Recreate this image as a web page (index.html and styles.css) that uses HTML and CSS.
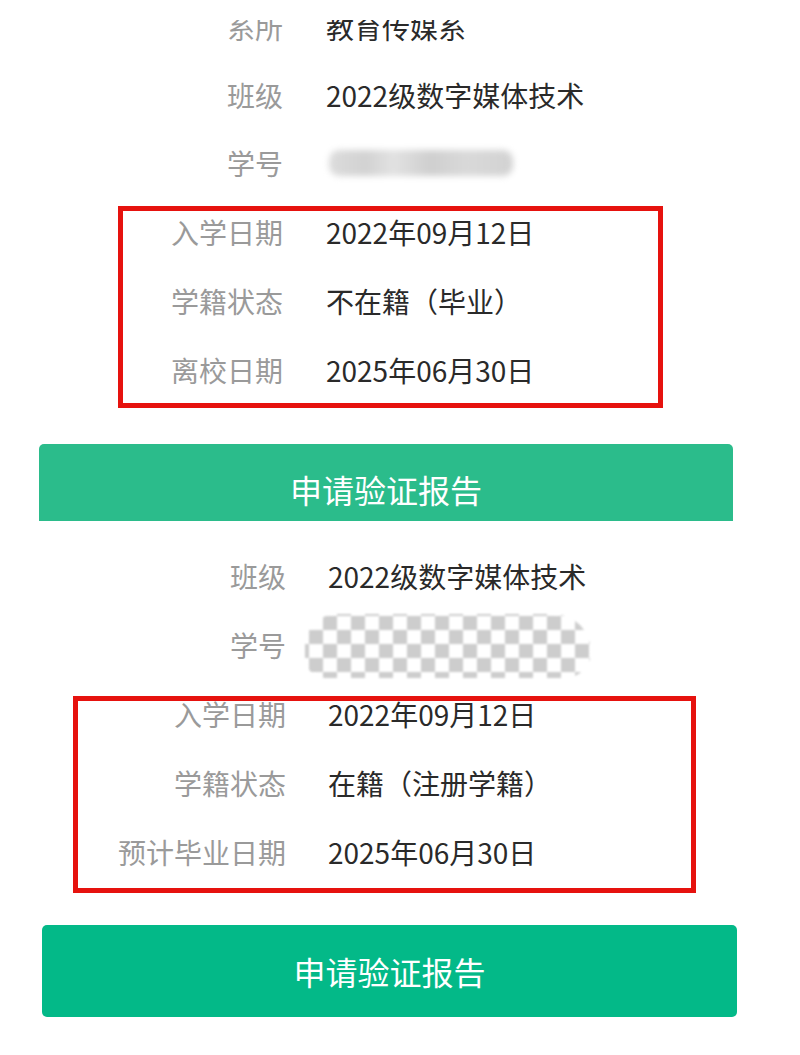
FILE: index.html
```html
<!DOCTYPE html>
<html lang="zh-CN">
<head>
<meta charset="utf-8">
<title>学籍信息</title>
<link rel="stylesheet" href="styles.css">
</head>
<body>
  <section class="sheet sheet-a">
    <div class="rows rows-a">
      <div class="cut">
        <div class="row"><span class="label">系所</span><span class="value">教育传媒系</span></div>
      </div>
      <div class="row"><span class="label">班级</span><span class="value">2022级数字媒体技术</span></div>
      <div class="row"><span class="label">学号</span><span class="value"><span class="smudge"></span></span></div>
    </div>
    <div class="mark mark-a">
      <div class="row"><span class="label">入学日期</span><span class="value">2022年09月12日</span></div>
      <div class="row"><span class="label">学籍状态</span><span class="value">不在籍（毕业）</span></div>
      <div class="row"><span class="label">离校日期</span><span class="value">2025年06月30日</span></div>
    </div>
    <button class="action action-a" type="button">申请验证报告</button>
  </section>

  <section class="sheet sheet-b">
    <div class="rows rows-b">
      <div class="row"><span class="label">班级</span><span class="value">2022级数字媒体技术</span></div>
      <div class="row"><span class="label">学号</span><span class="value"><span class="checker"></span></span></div>
    </div>
    <div class="mark mark-b">
      <div class="row"><span class="label">入学日期</span><span class="value">2022年09月12日</span></div>
      <div class="row"><span class="label">学籍状态</span><span class="value">在籍（注册学籍）</span></div>
      <div class="row"><span class="label">预计毕业日期</span><span class="value">2025年06月30日</span></div>
    </div>
    <button class="action action-b" type="button">申请验证报告</button>
  </section>
</body>
</html>
```
FILE: styles.css
```css
* { box-sizing: border-box; }

html, body {
  margin: 0;
  padding: 0;
  background: #ffffff;
}

body {
  width: 800px;
  font-family: "Noto Sans CJK SC", "Noto Sans", sans-serif;
  font-size: 28px;
}

.sheet {
  overflow: hidden;
  background: #ffffff;
}

.sheet-a { height: 521px; }
.sheet-b { height: 534px; padding-top: 21px; }

/* label / value rows */
.row {
  display: grid;
  white-space: nowrap;
  align-items: center;
}

.label {
  color: #9a9a9a;
  text-align: right;
}

.value {
  color: #2a2a2a;
  display: flex;
  align-items: center;
  height: 100%;
}

.rows-a .row {
  grid-template-columns: 283px 1fr;
  column-gap: 43px;
  height: 68px;
  line-height: 68px;
}

/* first row is scrolled partly under the top edge */
.cut {
  height: 41px;
  margin-top: 20px;
  overflow: hidden;
}
.cut .row { margin-top: -27px; }

.rows-b .row {
  grid-template-columns: 286px 1fr;
  column-gap: 42px;
  height: 69px;
  line-height: 69px;
}

/* red annotation frames */
.mark {
  border: 5px solid #e6120e;
  display: flex;
  flex-direction: column;
}

.mark-a {
  margin: 9px 0 0 118px;
  width: 545px;
  gap: 27px;
  padding-bottom: 12px;
}
.mark-a .row {
  grid-template-columns: 160px 1fr;
  column-gap: 43px;
  height: 42px;
  line-height: 42px;
}

.mark-b {
  margin: 16px 0 0 73px;
  width: 623px;
  gap: 43px;
  padding-bottom: 23px;
}
.mark-b .row {
  grid-template-columns: 208px 1fr;
  column-gap: 42px;
  height: 26px;
  line-height: 26px;
}

/* hidden student numbers */
.smudge {
  display: block;
  width: 184px;
  height: 26px;
  margin-left: 3px;
  border-radius: 10px;
  background: linear-gradient(90deg, #dcdcdc 0%, #d2d2d2 20%, #e2e2e2 35%, #cfcfcf 55%, #d9d9d9 75%, #d2d2d2 100%);
  filter: blur(3px);
}

.checker {
  display: block;
  width: 286px;
  height: 64px;
  margin-left: -23px;
  border-radius: 34px 40px 28px 22px;
  background-color: #ffffff;
  background-image: conic-gradient(#c8c8c8 0 25%, #ffffff 0 50%, #c8c8c8 0 75%, #ffffff 0);
  background-size: 28px 28px;
  background-position: 4px 2px;
  filter: blur(1.2px);
  opacity: 0.9;
}

/* green action buttons */
.action {
  display: block;
  border: 0;
  color: #ffffff;
  font-family: inherit;
  font-size: 32px;
  border-radius: 5px;
  text-align: center;
  padding: 0;
  cursor: pointer;
}

.action-a {
  margin: 36px 0 0 39px;
  width: 694px;
  height: 90px;
  background: #2bbc8b;
}

.action-b {
  margin: 32px 0 0 42px;
  width: 695px;
  height: 92px;
  background: #03b988;
}
```
